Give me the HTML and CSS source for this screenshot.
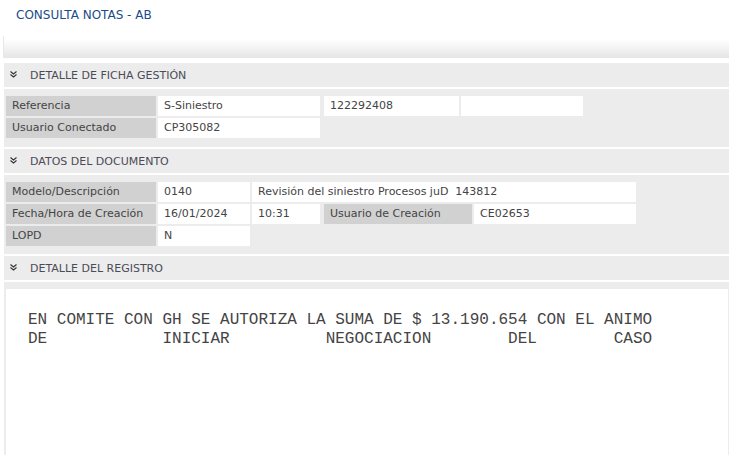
FILE: index.html
```html
<!DOCTYPE html>
<html lang="es">
<head>
    <meta charset="UTF-8">
    <title>Consulta Notas - AB</title>
    <link rel="stylesheet" href="styles.css">
</head>
<body>
    <h1 class="page-title">CONSULTA NOTAS - AB</h1>
    <div class="toolbar"></div>

    <div class="panel">
        <div class="section-head">
            <svg class="toggle" width="7" height="7" viewBox="0 0 7 7"><path d="M0.5 0.5 L3.5 3 L6.5 0.5 M0.5 3.5 L3.5 6 L6.5 3.5" fill="none" stroke="#333" stroke-width="1.1"/></svg>
            DETALLE DE FICHA GESTIÓN
        </div>
        <div class="section-body body-ficha">
            <div class="grid grid-ficha">
                <div class="cell label">Referencia</div>
                <div class="cell">S-Siniestro</div>
                <div class="cell push">122292408</div>
                <div class="cell"></div>
                <div class="cell label">Usuario Conectado</div>
                <div class="cell">CP305082</div>
            </div>
        </div>

        <div class="section-head">
            <svg class="toggle" width="7" height="7" viewBox="0 0 7 7"><path d="M0.5 0.5 L3.5 3 L6.5 0.5 M0.5 3.5 L3.5 6 L6.5 3.5" fill="none" stroke="#333" stroke-width="1.1"/></svg>
            DATOS DEL DOCUMENTO
        </div>
        <div class="section-body body-doc">
            <div class="grid grid-doc">
                <div class="cell label">Modelo/Descripción</div>
                <div class="cell">0140</div>
                <div class="cell span-rest pre">Revisión del siniestro Procesos juD  143812</div>
                <div class="cell label">Fecha/Hora de Creación</div>
                <div class="cell">16/01/2024</div>
                <div class="cell">10:31</div>
                <div class="cell label push">Usuario de Creación</div>
                <div class="cell">CE02653</div>
                <div class="cell label">LOPD</div>
                <div class="cell">N</div>
            </div>
        </div>

        <div class="section-head">
            <svg class="toggle" width="7" height="7" viewBox="0 0 7 7"><path d="M0.5 0.5 L3.5 3 L6.5 0.5 M0.5 3.5 L3.5 6 L6.5 3.5" fill="none" stroke="#333" stroke-width="1.1"/></svg>
            DETALLE DEL REGISTRO
        </div>
        <div class="section-body note-wrap">
            <div class="note">EN COMITE CON GH SE AUTORIZA LA SUMA DE $ 13.190.654 CON EL ANIMO
DE            INICIAR          NEGOCIACION        DEL        CASO</div>
        </div>
    </div>
</body>
</html>
```

FILE: styles.css
```css
body {
    margin: 0;
    background: #fff;
    font-family: 'DejaVu Sans', Verdana, sans-serif;
    font-size: 11px;
    color: #444;
}

.page-title {
    margin: 0;
    padding: 8px 0 0 16px;
    height: 28px;
    font-size: 12px;
    font-weight: normal;
    line-height: 14px;
    color: #1b4b8a;
}

.toolbar {
    margin-left: 3px;
    height: 22px;
    background: linear-gradient(to bottom, #fff 15%, #e5e5e5 100%);
    border-left: 1px solid #e8e8e8;
}

.panel {
    margin: 5px 0 0 4px;
}

.section-head {
    display: flex;
    align-items: center;
    height: 24px;
    padding-top: 1px;
    box-sizing: border-box;
    background: #ececec;
    color: #4b4b58;
    font-size: 11px;
    margin-bottom: 2px;
}

.toggle {
    margin: 0 13px 3px 6px;
}

.section-body {
    background: #ececec;
    padding: 7px 2px;
    margin-bottom: 2px;
}

.body-ficha {
    padding-bottom: 9px;
}

.body-doc {
    padding-bottom: 8px;
}

/* data grids */
.grid {
    display: grid;
    gap: 2px;
    grid-auto-rows: 20px;
}

.grid-ficha {
    grid-template-columns: 150px 162px 137px 122px;
}

.grid-doc {
    grid-template-columns: 150px 92px 68px 150px 162px;
}

.cell {
    background: #fff;
    line-height: 20px;
    padding-left: 6px;
    white-space: nowrap;
    overflow: hidden;
}

.cell.label {
    background: #d1d1d1;
}

.cell.push {
    margin-left: 2px;
}

.span-rest {
    grid-column: 3 / 6;
}

.pre {
    white-space: pre;
}

/* free text of the register */
.note-wrap {
    padding: 7px 1px 0 2px;
    margin-bottom: 0;
}

.note {
    background: #fff;
    height: 300px;
    padding: 22px 0 0 22px;
    font-family: 'Liberation Mono', 'Courier New', monospace;
    font-size: 16px;
    line-height: 19px;
    color: #444;
    white-space: pre;
}
```
